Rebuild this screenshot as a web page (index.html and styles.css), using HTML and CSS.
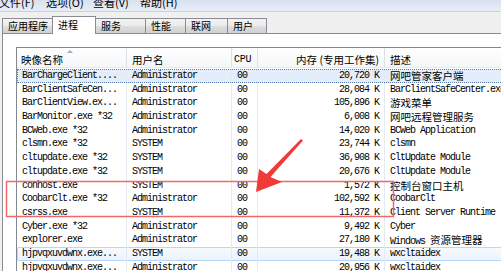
FILE: index.html
```html
<!DOCTYPE html>
<html lang="zh-CN">
<head>
    <meta charset="UTF-8">
    <title>Windows 任务管理器</title>
    <link rel="stylesheet" href="styles.css">
</head>
<body>
    <div class="window">
        <div class="menubar">
            <div class="menu-items">
                <span class="menu-item">文件(F)</span>
                <span class="menu-item">选项(O)</span>
                <span class="menu-item">查看(V)</span>
                <span class="menu-item">帮助(H)</span>
            </div>
        </div>

        <div class="tabstrip">
            <div class="tab tab-apps">应用程序</div>
            <div class="tab tab-procs selected">进程</div>
            <div class="tab tab-services">服务</div>
            <div class="tab tab-perf">性能</div>
            <div class="tab tab-net">联网</div>
            <div class="tab tab-users">用户</div>
        </div>

        <div class="panel">
            <div class="list">
                <div class="list-head">
                    <div class="head-cell name-head">映像名称<span class="sort-arrow"></span></div>
                    <div class="head-cell">用户名</div>
                    <div class="head-cell cpu-head">CPU</div>
                    <div class="head-cell num">内存 (专用工作集)</div>
                    <div class="head-cell">描述</div>
                </div>

                <div class="list-body">
                    <div class="row focused">
                        <span>BarChargeClient....</span><span>Administrator</span><span>00</span><span class="num">20,720 K</span><span class="zh">网吧管家客户端</span>
                    </div>
                    <div class="row">
                        <span>BarClientSafeCen...</span><span>Administrator</span><span>00</span><span class="num">28,084 K</span><span>BarClientSafeCenter.exe</span>
                    </div>
                    <div class="row">
                        <span>BarClientView.ex...</span><span>Administrator</span><span>00</span><span class="num">105,896 K</span><span class="zh">游戏菜单</span>
                    </div>
                    <div class="row">
                        <span>BarMonitor.exe *32</span><span>Administrator</span><span>00</span><span class="num">6,008 K</span><span class="zh">网吧远程管理服务</span>
                    </div>
                    <div class="row">
                        <span>BCWeb.exe *32</span><span>Administrator</span><span>00</span><span class="num">14,020 K</span><span>BCWeb Application</span>
                    </div>
                    <div class="row">
                        <span>clsmn.exe *32</span><span>SYSTEM</span><span>00</span><span class="num">23,744 K</span><span>clsmn</span>
                    </div>
                    <div class="row">
                        <span>cltupdate.exe *32</span><span>SYSTEM</span><span>00</span><span class="num">36,908 K</span><span>CltUpdate Module</span>
                    </div>
                    <div class="row">
                        <span>cltupdate.exe *32</span><span>SYSTEM</span><span>00</span><span class="num">20,676 K</span><span>CltUpdate Module</span>
                    </div>
                    <div class="row">
                        <span>conhost.exe</span><span>SYSTEM</span><span>00</span><span class="num">1,572 K</span><span class="zh">控制台窗口主机</span>
                    </div>
                    <div class="row">
                        <span>CoobarClt.exe *32</span><span>Administrator</span><span>00</span><span class="num">102,592 K</span><span>CoobarClt</span>
                    </div>
                    <div class="row">
                        <span>csrss.exe</span><span>SYSTEM</span><span>00</span><span class="num">11,372 K</span><span>Client Server Runtime</span>
                    </div>
                    <div class="row">
                        <span>Cyber.exe *32</span><span>Administrator</span><span>00</span><span class="num">9,492 K</span><span>Cyber</span>
                    </div>
                    <div class="row">
                        <span>explorer.exe</span><span>Administrator</span><span>00</span><span class="num">27,180 K</span><span>Windows <em class="zh">资源管理器</em></span>
                    </div>
                    <div class="row hover">
                        <span>hjpvqxuvdwnx.exe...</span><span>SYSTEM</span><span>00</span><span class="num">19,488 K</span><span>wxcltaidex</span>
                    </div>
                    <div class="row">
                        <span>hjpvqxuvdwnx.exe...</span><span>Administrator</span><span>00</span><span class="num">20,956 K</span><span>wxcltaidex</span>
                    </div>
                </div>
            </div>
        </div>

        <!-- red annotation drawn over the screenshot -->
        <svg class="marks" width="501" height="280" viewBox="0 0 501 280">
            <rect x="6.5" y="181.5" width="387" height="35" fill="none" stroke="#f26868" stroke-width="1.5"/>
            <polygon points="256,192 259,169 266.5,174 301,139 303,140.5 270.5,177 282,182" fill="#f03a3a"/>
        </svg>
    </div>
</body>
</html>
```

FILE: styles.css
```css
body {
    margin: 0;
    width: 501px;
    height: 280px;
    overflow: hidden;
    background: #fff;
    font-family: "Liberation Mono", "Noto Sans CJK SC", monospace;
    color: #000;
}
.window {
    position: relative;
    height: 271px;
    overflow: hidden;
    background: #f0f0f0;
}
.menubar {
    height: 11px;
    border-bottom: 1px solid #c6d2e2;
    background: linear-gradient(#d8e2ef, #e7edf6);
    overflow: hidden;
    font-family: "Noto Sans CJK SC", sans-serif;
    font-size: 11px;
}
.menu-items {
    display: flex;
    margin-top: -3px;
    margin-left: -1px;
    line-height: 11px;
}
.menu-item {
    width: 47px;
    flex: none;
}

/* tabs */
.tabstrip {
    height: 21px;
    display: flex;
    align-items: flex-end;
    padding-left: 2px;
    font-family: "Noto Sans CJK SC", sans-serif;
    font-size: 10px;
}
.tab {
    box-sizing: border-box;
    height: 15px;
    margin-right: -1px;
    padding-left: 5px;
    line-height: 14px;
    border: 1px solid #898c95;
    border-bottom: none;
    background: linear-gradient(#f3f3f3 0%, #ebebeb 50%, #dedede 51%, #d0d0d0 100%);
    flex: none;
}
.tab.selected {
    position: relative;
    z-index: 1;
    height: 18px;
    margin-bottom: -1px;
    line-height: 16px;
    background: #fff;
}
.tab-apps { width: 51px; }
.tab-procs { width: 44px; }
.tab-services { width: 51px; }
.tab-perf { width: 41px; }
.tab-net { width: 43px; }
.tab-users { width: 40px; }

.panel {
    margin-left: 2px;
    padding: 13px 0 0 13px;
    height: 260px;
    border-top: 1px solid #898c95;
    border-left: 1px solid #898c95;
    background: #fff;
}

/* process list */
.list {
    border-top: 1px solid #828790;
    border-left: 1px solid #828790;
    width: 600px;
}
.list-head, .row {
    display: grid;
    grid-template-columns: 110px 105px 26px 127px 1fr;
}
.list-head {
    box-sizing: border-box;
    height: 20px;
    border-bottom: 1px solid #e5e8ee;
    background: linear-gradient(#fff, #f5f6f8);
}
.head-cell {
    position: relative;
    box-sizing: border-box;
    padding: 5px 5px 0 5px;
    line-height: 14px;
    border-right: 1px solid #dde1e7;
    font-family: "Noto Sans CJK SC", sans-serif;
    font-size: 10.5px;
    white-space: nowrap;
}
.head-cell.name-head {
    padding-left: 4px;
}
.head-cell.cpu-head {
    padding-left: 2px;
    font-family: "Liberation Mono", monospace;
    font-size: 10px;
    letter-spacing: -0.3px;
}
.head-cell.num {
    text-align: right;
    padding-right: 5px;
}
.sort-arrow {
    position: absolute;
    left: 50px;
    top: 2px;
    width: 0;
    height: 0;
    border-left: 3px solid transparent;
    border-right: 3px solid transparent;
    border-bottom: 3px solid #9aacc4;
}

.list-body {
    padding-top: 1px;
}
.row {
    height: 13.7px;
    line-height: 13.7px;
    font-size: 10px;
    letter-spacing: -1px;
}
.row span {
    box-sizing: border-box;
    padding-left: 5px;
    border-right: 1px solid #e4eaf2;
    white-space: nowrap;
    overflow: hidden;
}
.row span.num {
    text-align: right;
    padding-right: 5px;
}
.zh {
    font-family: "Noto Sans CJK SC", sans-serif;
    font-size: 10.5px;
    font-style: normal;
    letter-spacing: 0;
}
.row.focused {
    background: #e4eefa;
    outline: 1px dotted #5a7eae;
    outline-offset: -1px;
}
.row.hover {
    background: linear-gradient(#f8fbfe, #eaf2fd);
    box-shadow: inset 0 0 0 1px #b8d6fb;
    border-radius: 2px;
}

.marks {
    position: absolute;
    left: 0;
    top: 0;
    pointer-events: none;
}
```
